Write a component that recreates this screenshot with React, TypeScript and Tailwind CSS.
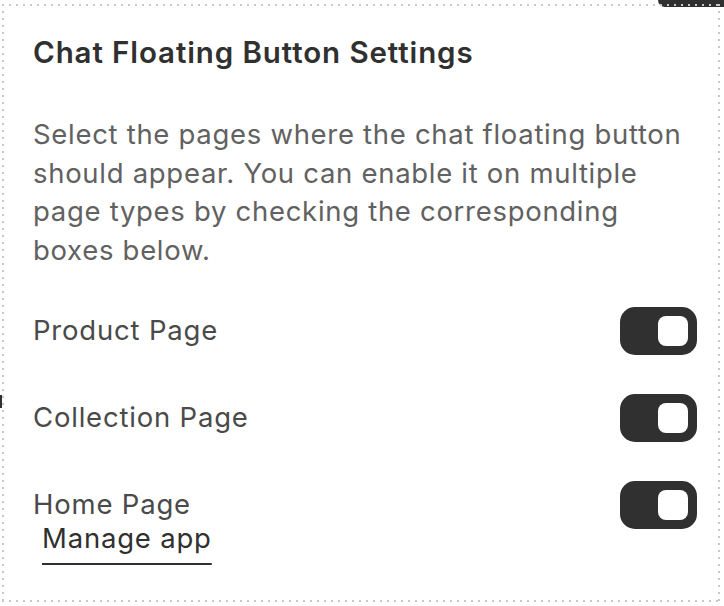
import { useState } from "react";

const pages = ["Product Page", "Collection Page", "Home Page"];

function Toggle({ on, onChange }: { on: boolean; onChange: () => void }) {
  return (
    <button
      type="button"
      onClick={onChange}
      className={`flex h-[48px] w-[77px] shrink-0 items-center rounded-[15px] px-[9px] ${
        on ? "justify-end bg-[#303030]" : "justify-start bg-[#b5b5b5]"
      }`}
    >
      <span className="block h-[30px] w-[30px] rounded-[8px] bg-white" />
    </button>
  );
}

export default function App() {
  const [enabled, setEnabled] = useState<Record<string, boolean>>({
    "Product Page": true,
    "Collection Page": true,
    "Home Page": true,
  });

  return (
    <div className="relative h-[606px] w-[724px] overflow-hidden bg-white font-['Inter',sans-serif]">
      {/* bits of neighbouring elements peeking in */}
      <div className="absolute right-0 top-0 h-[7px] w-[66px] rounded-bl-[10px] bg-[#303030]" />
      <div className="absolute left-0 top-[395px] h-[13px] w-[2px] bg-[#303030]" />

      <div className="relative ml-[2px] mt-[4px] flex w-[718px] flex-col pb-[49px] pl-[31px] pr-[23px] pt-[30px] [background-image:repeating-linear-gradient(90deg,#c8c8c8_0_2px,transparent_2px_7px),repeating-linear-gradient(90deg,#c8c8c8_0_2px,transparent_2px_7px),repeating-linear-gradient(180deg,#c8c8c8_0_2px,transparent_2px_7px),repeating-linear-gradient(180deg,#c8c8c8_0_2px,transparent_2px_7px)] [background-position:0_0,0_100%,0_0,100%_0] [background-repeat:no-repeat] [background-size:100%_2px,100%_2px,2px_100%,2px_100%]">
        <h2 className="text-[29.5px] font-semibold leading-[36px] tracking-[0.9px] text-[#303030]">
          Chat Floating Button Settings
        </h2>

        <p className="mt-[45px] text-[27.5px] leading-[38.6px] tracking-[0.7px] text-[#616161]">
          Select the pages where the chat floating button should appear. You can
          enable it on multiple page types by checking the corresponding boxes
          below.
        </p>

        <div className="mt-[38px] flex flex-col gap-[39px]">
          {pages.map((page) => (
            <div key={page} className="flex items-start justify-between">
              <div className="flex flex-col pt-[4px]">
                <span className="text-[27.5px] leading-[38.6px] tracking-[0.8px] text-[#4a4a4a]">
                  {page}
                </span>
                {page === "Home Page" && (
                  <a
                    href="#"
                    className="ml-[9px] text-[27.5px] leading-[29px] tracking-[0.8px] text-[#303030] underline decoration-2 underline-offset-[15px]"
                  >
                    Manage app
                  </a>
                )}
              </div>
              <Toggle
                on={enabled[page]}
                onChange={() =>
                  setEnabled((prev) => ({ ...prev, [page]: !prev[page] }))
                }
              />
            </div>
          ))}
        </div>
      </div>
    </div>
  );
}
